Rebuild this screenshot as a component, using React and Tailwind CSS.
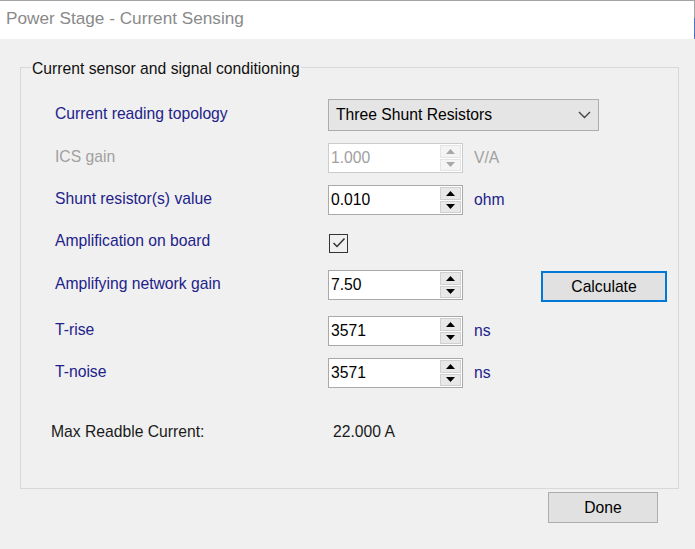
import React from "react";

const font = { fontFamily: '"Liberation Sans", Arial, sans-serif' };

function Spin({ value, disabled }) {
  const arrow = disabled ? "#a8a8a8" : "#000";
  return (
    <div
      className={`flex h-[30px] w-[135px] border ${disabled ? "border-[#cccccc]" : "border-[#a9a9a9]"} bg-white`}
    >
      <div className={`flex flex-1 items-center pl-[2px] text-[15.7px] ${disabled ? "text-[#a0a0a0]" : "text-black"}`}>
        {value}
      </div>
      <div className="mr-[1px] flex w-[21px] flex-col justify-center gap-[1px] py-[1px]">
        <div className={`flex h-[13px] items-center justify-center border ${disabled ? "border-[#e4e4e4] bg-[#f4f4f4]" : "border-[#d0d0d0] bg-[#e8e8e8]"}`}>
          <svg width="9" height="5" viewBox="0 0 9 5"><path d="M0 5 L4.5 0 L9 5 Z" fill={arrow} /></svg>
        </div>
        <div className={`flex h-[13px] items-center justify-center border ${disabled ? "border-[#e4e4e4] bg-[#f4f4f4]" : "border-[#d0d0d0] bg-[#e8e8e8]"}`}>
          <svg width="9" height="5" viewBox="0 0 9 5"><path d="M0 0 L9 0 L4.5 5 Z" fill={arrow} /></svg>
        </div>
      </div>
    </div>
  );
}

function Label({ children, gray }) {
  return (
    <div className={`w-[273px] shrink-0 pb-[2px] text-[15.7px] ${gray ? "text-[#a0a0a0]" : "text-[#22228a]"}`}>{children}</div>
  );
}

export default function App() {
  return (
    <div className="h-[549px] w-[695px] overflow-hidden bg-[#f0f0f0]" style={font}>
      <div className="flex h-[39px] border-t border-[#a5a5a5] bg-white">
        <div className="flex flex-1 items-center pl-[6px] pb-[2px] text-[17.2px] text-[#8a8a8a]">
          Power Stage - Current Sensing
        </div>
        <div className="flex w-[1px] flex-col">
          <div className="h-[17px] bg-[#a5a5a5]" />
          <div className="flex-1 bg-[#4a78c0]" />
        </div>
      </div>

      <div className="relative ml-[20px] mt-[28px] h-[422px] w-[659px] border border-[#d8d8d8]">
        <span className="absolute left-[10px] top-[-11px] bg-[#f0f0f0] px-[1px] text-[15.7px] text-[#111]">
          Current sensor and signal conditioning
        </span>
        <div className="flex flex-col pl-[34px] pt-[31px]">
          <div className="flex h-[32px] items-center">
            <Label>Current reading topology</Label>
            <div className="flex h-[32px] w-[271px] items-center justify-between border border-[#adadad] bg-[#e5e5e5] pl-[7px] pr-[7px] text-[15.7px] text-black">
              <span>Three Shunt Resistors</span>
              <svg width="13" height="8" viewBox="0 0 13 8">
                <path d="M1 1 L6.5 6.5 L12 1" fill="none" stroke="#444" strokeWidth="1.4" />
              </svg>
            </div>
          </div>

          <div className="mt-[12px] flex h-[30px] items-center">
            <Label gray>ICS gain</Label>
            <Spin value="1.000" disabled />
            <span className="ml-[11px] text-[15.7px] text-[#a0a0a0]">V/A</span>
          </div>

          <div className="mt-[12px] flex h-[30px] items-center">
            <Label>Shunt resistor(s) value</Label>
            <Spin value="0.010" />
            <span className="ml-[11px] text-[15.7px] text-[#22228a]">ohm</span>
          </div>

          <div className="mt-[12px] flex h-[30px] items-center">
            <Label>Amplification on board</Label>
            <div className="ml-[1px] mt-[2px] flex h-[19px] w-[19px] items-center justify-center border border-[#333] bg-[#f0f0f0]">
              <svg width="14" height="12" viewBox="0 0 14 12">
                <path d="M1.5 6 L5 9.5 L12.5 1.5" fill="none" stroke="#333" strokeWidth="1.5" />
              </svg>
            </div>
          </div>

          <div className="mt-[13px] flex h-[30px] items-center">
            <Label>Amplifying network gain</Label>
            <Spin value="7.50" />
            <button className="ml-[78px] mt-[3px] flex h-[31px] w-[126px] items-center justify-center border-2 border-[#0078d7] bg-[#e1e1e1] text-[15.7px] text-black">
              Calculate
            </button>
          </div>

          <div className="mt-[16px] flex h-[30px] items-center">
            <Label>T-rise</Label>
            <Spin value="3571" />
            <span className="ml-[11px] text-[15.7px] text-[#22228a]">ns</span>
          </div>

          <div className="mt-[12px] flex h-[30px] items-center">
            <Label>T-noise</Label>
            <Spin value="3571" />
            <span className="ml-[11px] text-[15.7px] text-[#22228a]">ns</span>
          </div>

          <div className="mt-[29px] flex h-[30px] items-center">
            <div className="-ml-[4px] w-[282px] shrink-0 text-[15.7px] text-[#1a1a1a]">Max Readble Current:</div>
            <span className="text-[15.7px] text-[#1a1a1a]">22.000 A</span>
          </div>
        </div>
      </div>

      <div className="flex justify-end pr-[37px] pt-[3px]">
        <button className="flex h-[31px] w-[110px] items-center justify-center border border-[#adadad] bg-[#e1e1e1] text-[15.7px] text-black">
          Done
        </button>
      </div>
    </div>
  );
}
